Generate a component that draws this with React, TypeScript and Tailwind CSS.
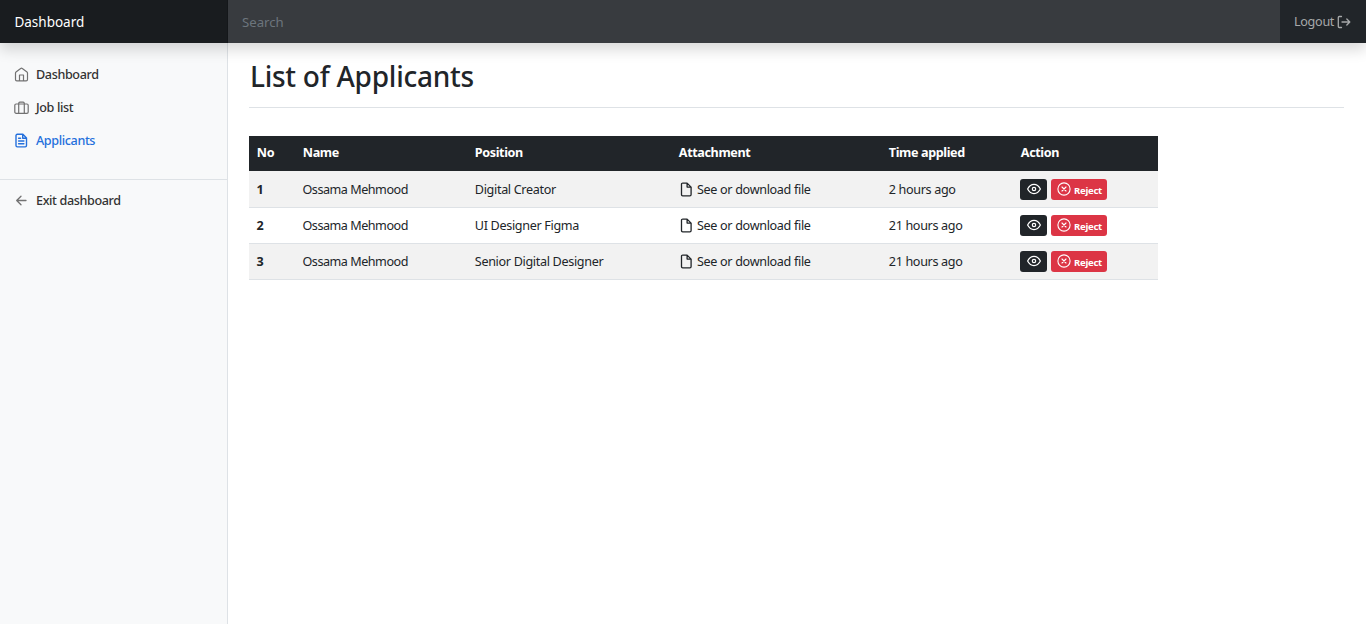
import React from "react";

const icon = "shrink-0 fill-none stroke-current [stroke-linecap:round] [stroke-linejoin:round]";

function HomeIcon() {
  return (
    <svg className={`${icon} h-[15px] w-[15px]`} viewBox="0 0 15 15" strokeWidth="1.2">
      <path d="M1.500 6q0-.600.500-1L6.700 1.500q.800-.600 1.600 0L13 5q.500.400.500 1v6.500q0 1.300-1.300 1.300H2.800q-1.300 0-1.300-1.300zM5.500 13.800V8h4v5.800" />
    </svg>
  );
}

function CaseIcon() {
  return (
    <svg className={`${icon} h-[15px] w-[15px]`} viewBox="0 0 15 15" strokeWidth="1.2">
      <rect x="0.8" y="4" width="13.4" height="9.3" rx="1.3" />
      <path d="M4.700 13.300V3.400q0-1.200 1.200-1.200h3.200q1.200 0 1.200 1.200v9.900" />
    </svg>
  );
}

function ArticleIcon() {
  return (
    <svg className={`${icon} h-[15px] w-[15px]`} viewBox="0 0 15 15" strokeWidth="1.4">
      <path d="M2 2.600q0-1.300 1.300-1.300h5.600L12.500 5v7.600q0 1.300-1.300 1.300H3.300Q2 13.900 2 12.600zM8.700 1.500V5.200h3.700M4.600 5.200h2M4.600 8h5.300M4.600 10.800h5.300" />
    </svg>
  );
}

function ArrowIcon() {
  return (
    <svg className={`${icon} h-[15px] w-[15px]`} viewBox="0 0 15 15" strokeWidth="1.3">
      <path d="M12 7.500H2.800M7 3.200 2.700 7.500 7 11.800" />
    </svg>
  );
}

function LogoutIcon() {
  return (
    <svg className={`${icon} h-[14px] w-[14px]`} viewBox="0 0 14 14" strokeWidth="1.3">
      <path d="M4.500 1.500H2.300q-1 0-1 1v9q0 1 1 1h2.200M5 7h7.700M9.800 4l3 3-3 3" />
    </svg>
  );
}

function FileIcon() {
  return (
    <svg className={`${icon} h-[15px] w-[14px]`} viewBox="0 0 14 15" strokeWidth="1.3">
      <path d="M2.500 2.300q0-1.200 1.200-1.200h4.400l4 4v7.500q0 1.200-1.200 1.200H3.700q-1.200 0-1.200-1.200zM8.100 1.100v4h4" />
    </svg>
  );
}

function EyeIcon() {
  return (
    <svg className={`${icon} h-[14px] w-[14px]`} viewBox="0 0 14 14" strokeWidth="1.2">
      <path d="M.600 7Q3 2.400 7 2.400T13.400 7Q11 11.600 7 11.600T.600 7Z" />
      <circle cx="7" cy="7" r="1.7" />
    </svg>
  );
}

function RejectIcon() {
  return (
    <svg className={`${icon} h-[14px] w-[14px]`} viewBox="0 0 14 14" strokeWidth="1.1">
      <circle cx="7" cy="7" r="6.1" />
      <path d="m5 5 4 4m0-4L5 9" />
    </svg>
  );
}

const applicants = [
  { no: 1, name: "Ossama Mehmood", position: "Digital Creator", time: "2 hours ago" },
  { no: 2, name: "Ossama Mehmood", position: "UI Designer Figma", time: "21 hours ago" },
  { no: 3, name: "Ossama Mehmood", position: "Senior Digital Designer", time: "21 hours ago" },
];

function NavItem({ glyph, label, active }: { glyph: React.ReactNode; label: string; active?: boolean }) {
  return (
    <a className={`flex h-[33px] items-center gap-[7px] pl-3.5 font-medium tracking-[-0.38px] ${active ? "text-[#2470dc]" : "text-[#333]"}`}>
      <span className={active ? "text-[#2470dc]" : "text-[#727272]"}>{glyph}</span>
      <span className="pt-0.5">{label}</span>
    </a>
  );
}

export default function App() {
  return (
    <div className="flex h-[624px] flex-col overflow-hidden bg-white font-['Noto_Sans','Open_Sans',sans-serif] text-[12.6px] text-[#212529]">
      <header className="relative z-10 flex h-[43px] shrink-0 bg-[#212529] shadow-[0_7px_14px_rgba(0,0,0,0.15)]">
        <div className="flex w-[228px] items-center border-r border-[#14171a] bg-[#191c1f] pl-[14.4px] pt-0.5 text-[13.5px] text-white">Dashboard</div>
        <div className="flex flex-1 items-center bg-[#383b3f] pl-3.5 pt-[3px] text-[13.2px] text-[#6c757d]">Search</div>
        <div className="flex w-[86px] items-center gap-[3px] pl-3.5 text-[#a6a8a9]">
          <span className="pt-0.5 tracking-[-0.3px]">Logout</span>
          <LogoutIcon />
        </div>
      </header>
      <div className="flex min-h-0 flex-1">
        <nav className="w-[228px] shrink-0 border-r border-[#dee2e6] bg-[#f8f9fa] pt-[15px]">
          <NavItem glyph={<HomeIcon />} label="Dashboard" />
          <NavItem glyph={<CaseIcon />} label="Job list" />
          <NavItem glyph={<ArticleIcon />} label="Applicants" active />
          <div className="mt-[22px] border-t border-[#dee2e6] pt-[4px]">
            <NavItem glyph={<ArrowIcon />} label="Exit dashboard" />
          </div>
        </nav>
        <main className="flex-1 pl-[21px] pr-[22px]">
          <h1 className="flex h-[65px] items-center border-b border-[#dee2e6] pl-px pt-px text-[28px] font-medium tracking-[-0.25px]">List of Applicants</h1>
          <table className="mt-7 w-[909px] table-fixed border-collapse text-left tracking-[-0.33px]">
            <colgroup>
              <col className="w-[46px]" />
              <col className="w-[172px]" />
              <col className="w-[204px]" />
              <col className="w-[210px]" />
              <col className="w-[132px]" />
              <col className="w-[145px]" />
            </colgroup>
            <thead>
              <tr className="h-[35px] bg-[#212529] text-white">
                {["No", "Name", "Position", "Attachment", "Time applied", "Action"].map((h) => (
                  <th key={h} className="py-0 pl-[7.8px] font-bold tracking-[-0.38px]">{h}</th>
                ))}
              </tr>
            </thead>
            <tbody>
              {applicants.map((a) => (
                <tr key={a.no} className="h-9 border-b border-[#dee2e6] odd:bg-[#f2f2f2]">
                  <th className="pb-0 pl-[7.5px] pt-[3px] font-bold">{a.no}</th>
                  <td className="pb-0 pl-[7.5px] pt-[3px] tracking-[-0.48px]">{a.name}</td>
                  <td className="pb-0 pl-[7.8px] pt-[3px]">{a.position}</td>
                  <td className="pb-0 pl-2 pt-px">
                    <span className="flex items-center gap-1">
                      <FileIcon />
                      <span className="pt-0.5">See or download file</span>
                    </span>
                  </td>
                  <td className="pb-0 pl-[7.8px] pt-[3px] tracking-[-0.35px]">{a.time}</td>
                  <td className="pb-0 pl-[7px] pt-px">
                    <div className="flex gap-1">
                      <button className="flex h-[21px] w-[27px] items-center justify-center rounded-[3px] bg-[#212529] pb-px text-white"><EyeIcon /></button>
                      <button className="flex h-[21px] w-14 items-center gap-[3px] rounded-[3px] bg-[#dc3545] pl-1.5 text-[9.5px] font-bold tracking-[-0.25px] text-white">
                        <span className="pb-px"><RejectIcon /></span>
                        <span className="pt-[3px]">Reject</span>
                      </button>
                    </div>
                  </td>
                </tr>
              ))}
            </tbody>
          </table>
        </main>
      </div>
    </div>
  );
}
